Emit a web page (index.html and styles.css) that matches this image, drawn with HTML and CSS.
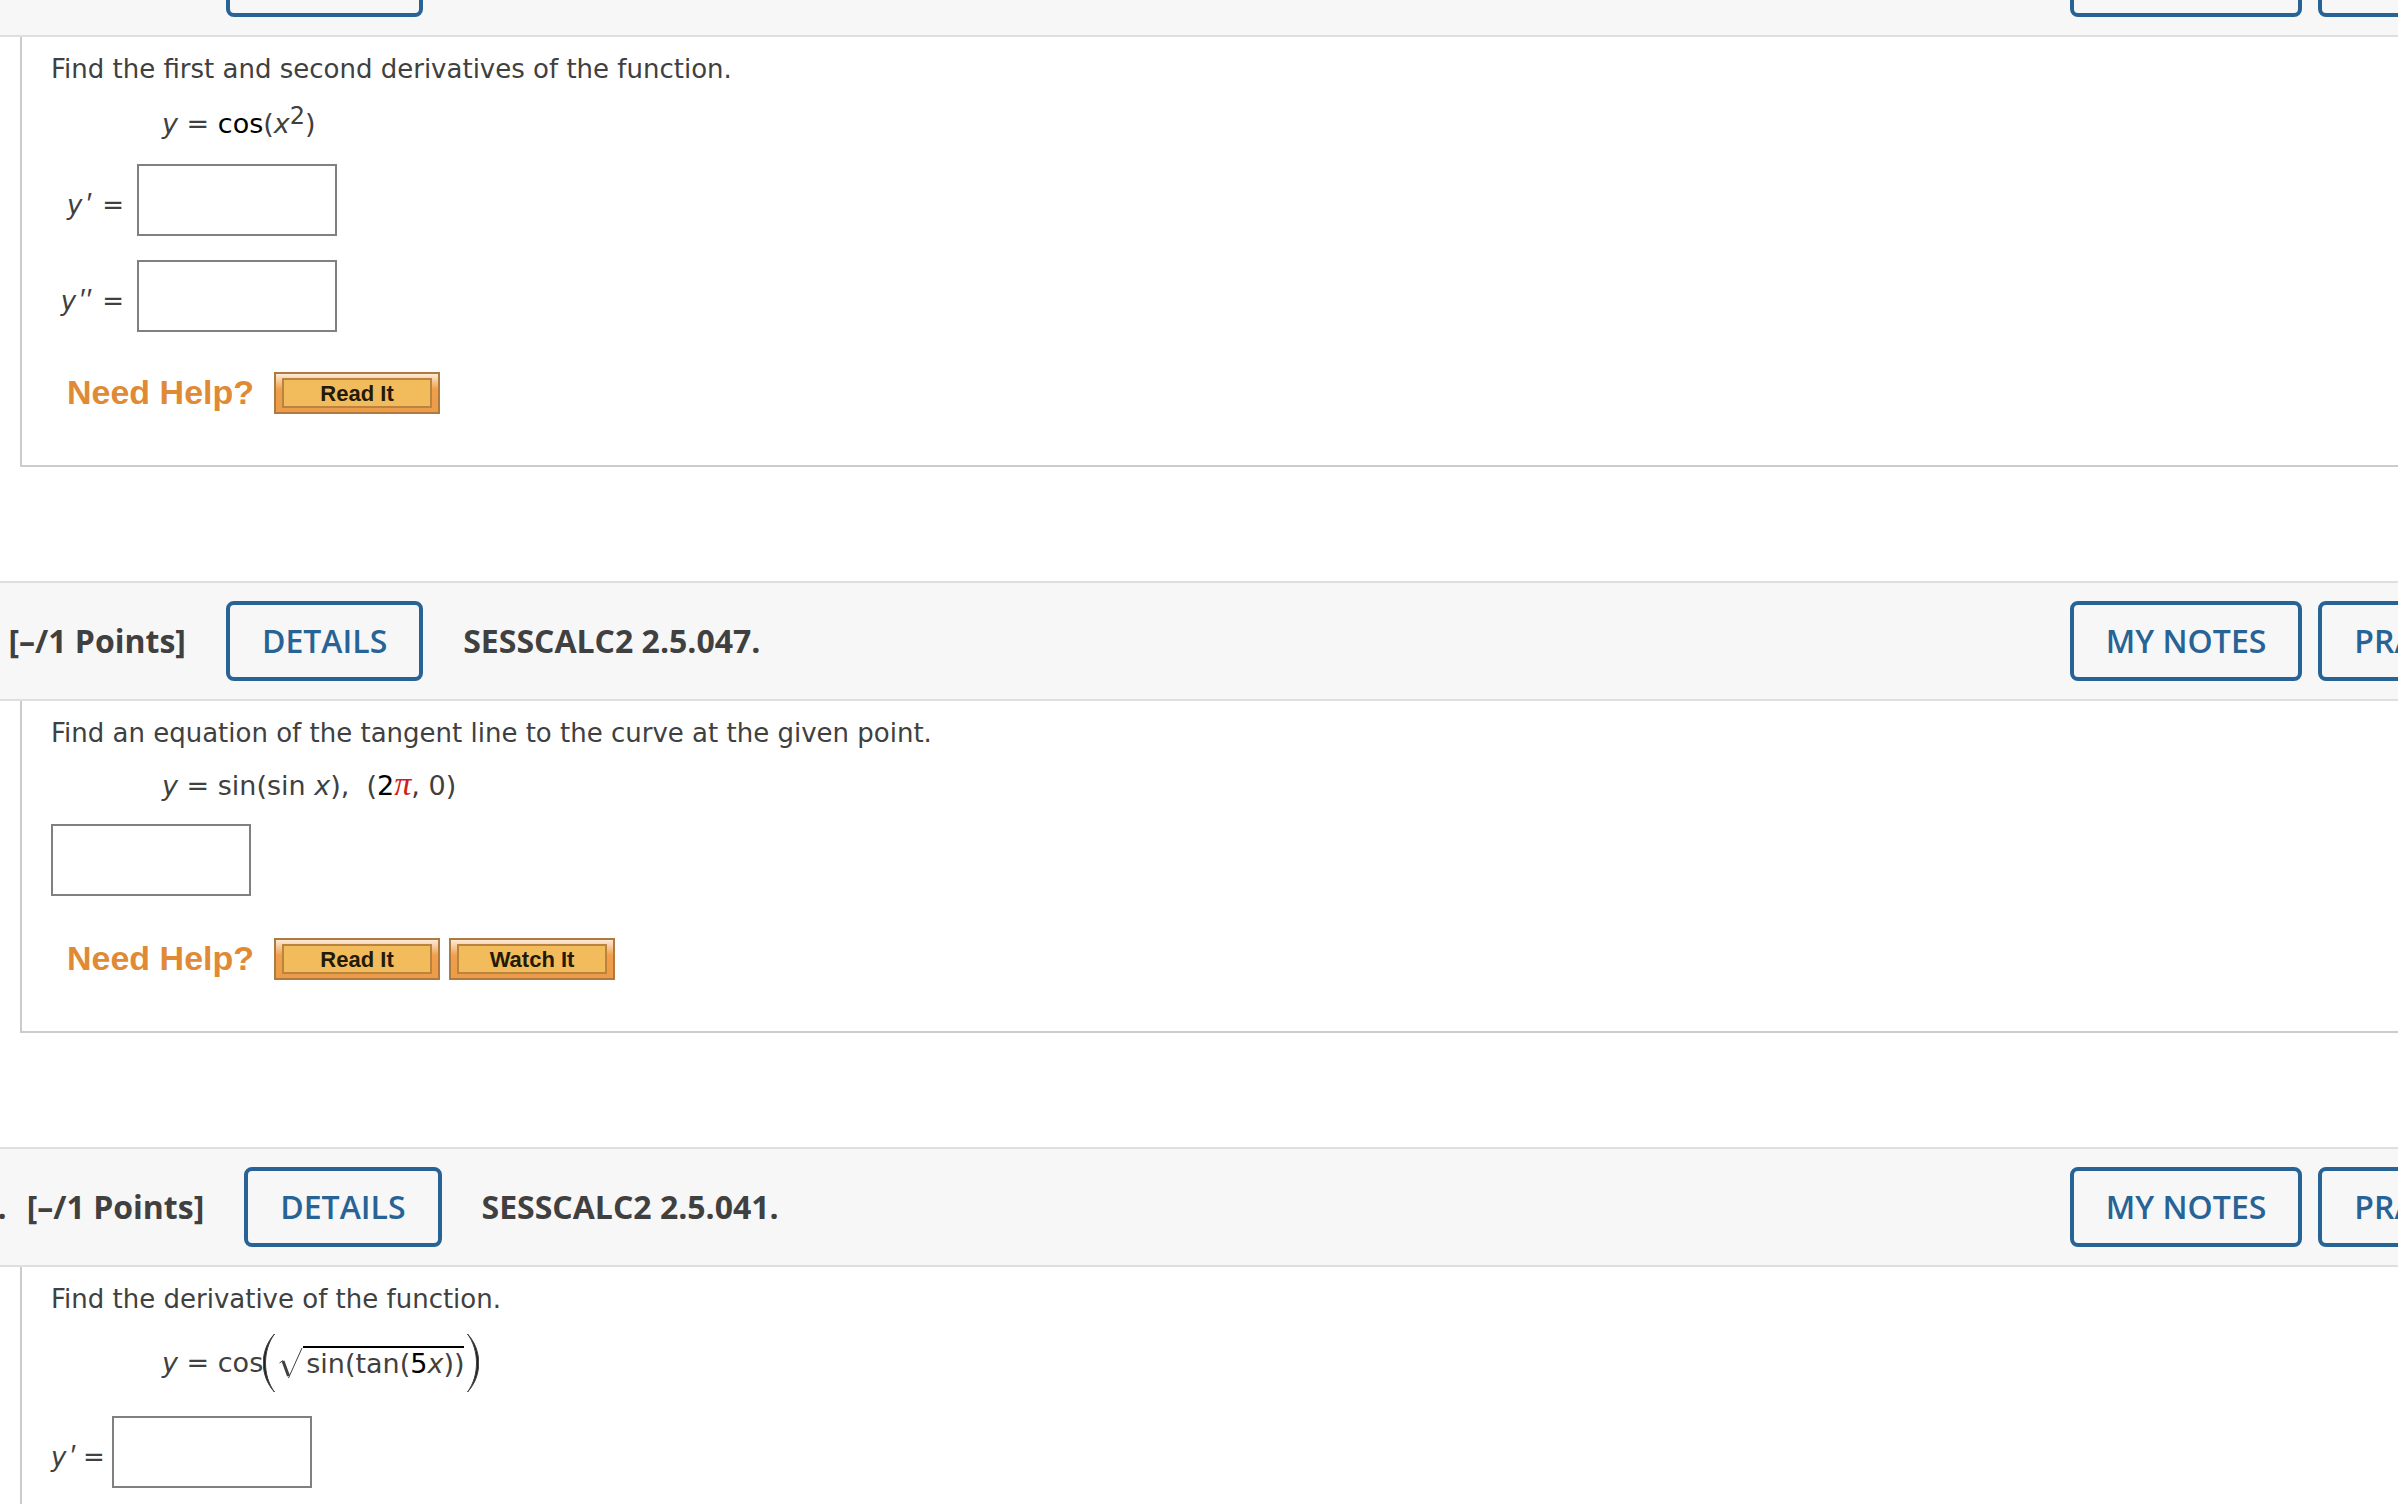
FILE: index.html
```html
<!DOCTYPE html>
<html lang="en">
<head>
<meta charset="utf-8">
<title>Homework</title>
<link rel="stylesheet" href="styles.css">
</head>
<body>
<main class="page">
  <section class="question">
    <header class="bar">
      <h2 class="points"><span class="number">8.</span>[–/1 Points]</h2>
      <button class="btn" type="button">DETAILS</button>
      <h2 class="source">SESSCALC2 2.5.026.</h2>
      <div class="actions">
        <button class="btn" type="button">MY NOTES</button>
        <button class="btn" type="button">PRACTICE ANOTHER</button>
      </div>
    </header>
    <div class="body">
      <p class="prompt">Find the first and second derivatives of the function.</p>
      <p class="equation equation-power"><i>y</i> = <span class="given">cos</span>(<i>x</i><sup>2</sup>)</p>
      <div class="answers answers-table">
        <label class="lhs" for="q8a"><i>y</i><span class="prime">'</span> =</label>
        <input class="answer" id="q8a" type="text">
        <label class="lhs" for="q8b"><i>y</i><span class="prime">''</span> =</label>
        <input class="answer" id="q8b" type="text">
      </div>
      <div class="help">
        <span class="help-title">Need Help?</span>
        <button class="help-btn" type="button"><span class="help-face">Read It</span></button>
      </div>
    </div>
  </section>

  <section class="question">
    <header class="bar">
      <h2 class="points"><span class="number">9.</span>[–/1 Points]</h2>
      <button class="btn" type="button">DETAILS</button>
      <h2 class="source">SESSCALC2 2.5.047.</h2>
      <div class="actions">
        <button class="btn" type="button">MY NOTES</button>
        <button class="btn" type="button">PRACTICE ANOTHER</button>
      </div>
    </header>
    <div class="body">
      <p class="prompt">Find an equation of the tangent line to the curve at the given point.</p>
      <p class="equation"><i>y</i> = sin(sin <i>x</i>),&nbsp; (<span class="given">2</span><span class="pi">π</span>, 0)</p>
      <input class="answer" type="text" aria-label="Equation of the tangent line">
      <div class="help">
        <span class="help-title">Need Help?</span>
        <button class="help-btn" type="button"><span class="help-face">Read It</span></button>
        <button class="help-btn" type="button"><span class="help-face">Watch It</span></button>
      </div>
    </div>
  </section>

  <section class="question">
    <header class="bar">
      <h2 class="points"><span class="number">10.</span>[–/1 Points]</h2>
      <button class="btn" type="button">DETAILS</button>
      <h2 class="source">SESSCALC2 2.5.041.</h2>
      <div class="actions">
        <button class="btn" type="button">MY NOTES</button>
        <button class="btn" type="button">PRACTICE ANOTHER</button>
      </div>
    </header>
    <div class="body">
      <p class="prompt">Find the derivative of the function.</p>
      <div class="equation equation-root">
        <span><i>y</i> = cos</span>
        <svg class="paren" viewBox="0 0 12 58" aria-hidden="true"><path d="M11.500 0C-3.500 16-3.500 42 11.500 58C-.5 42-.5 16 11.500 0z"/></svg>
        <svg class="radical" viewBox="0 0 24 32" aria-hidden="true"><path class="thin" d="M.5 16L4 13.500M9.500 31L23 1"/><path class="thick" d="M4 14l5.500 15"/></svg>
        <span class="radicand">sin(tan(<span class="given">5</span><i>x</i>))</span>
        <svg class="paren" viewBox="0 0 12 58" aria-hidden="true"><path d="M.5 0C15.500 16 15.500 42 .5 58C12.500 42 12.500 16 .5 0z"/></svg>
      </div>
      <div class="answers">
        <label class="lhs" for="q10"><i>y</i><span class="prime">'</span> =</label>
        <input class="answer" id="q10" type="text">
      </div>
    </div>
  </section>
</main>
</body>
</html>
```
FILE: styles.css
```css
* { box-sizing: border-box; }

body {
  margin: 0;
  overflow: hidden;
  background: #fff;
  color: #404040;
  font: 26px/32px "DejaVu Sans", Verdana, sans-serif;
}

/* The page is scrolled a little down and to the right. */
.page { margin: -83px -316px 0 -40px; }

.question { margin-bottom: 114px; }

.bar {
  display: flex;
  align-items: center;
  padding: 18px 16px 18px 9px;
  border: solid #dfdfdf;
  border-width: 2px 0;
  background: #f7f7f7;
}

.points,
.source {
  margin: 0;
  font: 700 32px/44px "Open Sans", sans-serif;
  white-space: nowrap;
}

.points { margin-right: 40px; }
.number { margin-right: 20px; }
.source { margin-left: 40px; }

/* The number column starts beyond the scrolled edge. */
.points { margin-left: -8px; }

.btn {
  height: 80px;
  padding: 0 32px;
  border: 4px solid #286396;
  border-radius: 8px;
  background: transparent;
  color: #286396;
  font: 600 32px/44px "Open Sans", sans-serif;
  white-space: nowrap;
}

.actions {
  display: flex;
  gap: 16px;
  margin-left: auto;
}

.body {
  margin-left: 60px;
  padding: 16px 29px 51px;
  border: solid #ccc;
  border-width: 0 0 2px 2px;
}

.prompt { margin: 0; }

.equation {
  margin: 21px 0 22px 111px;
  font-size: 27px;
}

.equation-power { margin-top: 23px; margin-bottom: 24px; }

.equation sup {
  font-size: 24px;
  line-height: 0;
  vertical-align: 9px;
}

.given { color: #000; }

.pi {
  color: #d2201a;
  font: italic 400 34px/0 "Liberation Serif", serif;
}

.prime {
  margin-left: 2px;
  font: italic 400 30px/0 "Open Sans", sans-serif;
}

.equation-root {
  display: flex;
  align-items: center;
  margin-top: 19px;
  margin-bottom: 24px;
}

.paren {
  width: 12px;
  height: 58px;
  fill: #202020;
  stroke: #404040;
  stroke-width: 1;
}

.radical {
  width: 24px;
  height: 32px;
  margin-left: 4px;
  fill: none;
  stroke: #404040;
}

.thin { stroke-width: 1; }
.thick { stroke-width: 3; }

.radicand {
  padding-left: 3px;
  margin-right: 3px;
  border-top: 2px solid #000;
}

.answers {
  display: grid;
  grid-template-columns: auto auto;
  justify-content: start;
  gap: 24px 7px;
}

.answers-table {
  grid-template-columns: 73px auto;
  column-gap: 13px;
}

.answers-table .prime { margin-right: 3px; }

.lhs {
  padding-top: 25px;
  text-align: right;
  white-space: nowrap;
}

.answer {
  display: block;
  width: 200px;
  height: 72px;
  padding: 0 8px;
  border: 2px solid #808080;
  border-radius: 0;
  background: #fff;
  font: inherit;
}

.help {
  display: flex;
  align-items: center;
  gap: 9px;
  margin: 42px 0 0 16px;
}

.answers + .help { margin-top: 40px; }

.help-title {
  margin-right: 11px;
  padding-bottom: 2px;
  color: #e08a36;
  font: 700 34px/40px "Liberation Sans", Arial, sans-serif;
}

.help-btn {
  width: 166px;
  height: 42px;
  padding: 4px 6px;
  border: 2px solid #ae7a40;
  border-radius: 0;
  background: linear-gradient(#fdebd8, #f0a04b 40%, #ec9c48);
}

.help-face {
  display: block;
  padding-top: 2px;
  border: 2px solid #b88440;
  background: #f2bc5c;
  color: #241a08;
  font: 700 22px/24px "Liberation Sans", Arial, sans-serif;
}
```
